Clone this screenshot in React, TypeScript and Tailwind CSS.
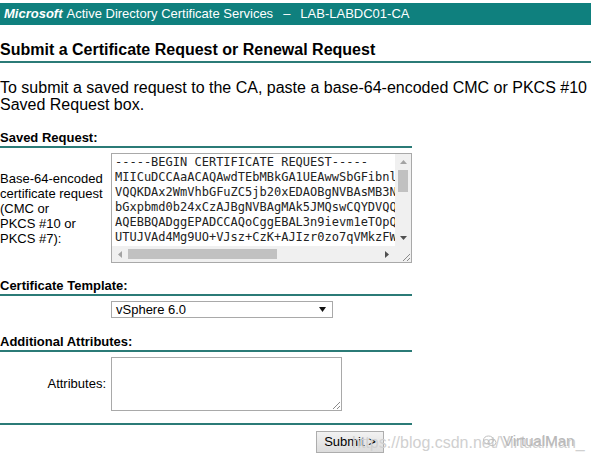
import React from 'react';

const csrLines = [
  '-----BEGIN CERTIFICATE REQUEST-----',
  'MIICuDCCAaACAQAwdTEbMBkGA1UEAwwSbGFibnlvbmQ',
  'VQQKDAx2WmVhbGFuZC5jb20xEDAOBgNVBAsMB3NlcnZ',
  'bGxpbmd0b24xCzAJBgNVBAgMAk5JMQswCQYDVQQGEwJ',
  'AQEBBQADggEPADCCAQoCggEBAL3n9ievm1eTOpQ4nZk',
  'UTUJVAd4Mg9UO+VJsz+CzK+AJIzr0zo7qVMkzFWq8Lx',
];

const SectionLabel: React.FC<{ children: React.ReactNode }> = ({ children }) => (
  <div className="border-b-2 border-[#2b7b77] pb-[1px] text-[13px] font-bold leading-[15px] text-black">
    {children}
  </div>
);

const ArrowUp = () => (
  <svg width="7" height="4" viewBox="0 0 7 4">
    <path d="M0 4 L3.5 0 L7 4 Z" fill="#a3a3a3" />
  </svg>
);

const ArrowDown = () => (
  <svg width="7" height="4" viewBox="0 0 7 4">
    <path d="M0 0 L3.5 4 L7 0 Z" fill="#505050" />
  </svg>
);

const ArrowLeft = () => (
  <svg width="4" height="7" viewBox="0 0 4 7">
    <path d="M4 0 L0 3.5 L4 7 Z" fill="#a3a3a3" />
  </svg>
);

const ArrowRight = () => (
  <svg width="4" height="7" viewBox="0 0 4 7">
    <path d="M0 0 L4 3.5 L0 7 Z" fill="#505050" />
  </svg>
);

const Grip = () => (
  <svg width="8" height="8" viewBox="0 0 8 8">
    <path d="M8 1 L1 8 M8 5 L5 8" stroke="#8a8a8a" strokeWidth="1" />
  </svg>
);

export default function App() {
  return (
    <div className="relative h-[465px] w-[591px] overflow-hidden bg-white font-['Liberation_Sans',Arial,sans-serif] text-black">
      {/* banner */}
      <div className="mt-[3px] flex h-[22px] items-center whitespace-nowrap bg-[#0f807e] px-[4px] text-[13px] text-white">
        <span className="font-bold italic">Microsoft</span>
        <span className="ml-[4px]">Active Directory Certificate Services</span>
        <span className="ml-[10px]">–</span>
        <span className="ml-[10px]">LAB-LABDC01-CA</span>
      </div>

      <div className="mt-[15px] border-b-2 border-[#2b7b77] pb-[2px] text-[16px] font-bold leading-[19px]">
        Submit a Certificate Request or Renewal Request
      </div>

      <p className="mt-[16px] whitespace-nowrap text-[16px] leading-[17px]">
        To submit a saved request to the CA, paste a base-64-encoded CMC or PKCS #10 certificate request or PKCS #7
        <br />
        Saved Request box.
      </p>

      <div className="mt-[17px] w-[412px]">
        <SectionLabel>Saved Request:</SectionLabel>

        <div className="mt-[5px] flex">
          <div className="w-[111px] pt-[18px] text-[13px] leading-[15px]">
            Base-64-encoded
            <br />
            certificate request
            <br />
            (CMC or
            <br />
            PKCS #10 or
            <br />
            PKCS #7):
          </div>
          <div className="flex h-[110px] w-[301px] border border-[#a9a9a9]">
            <div className="flex flex-1 flex-col overflow-hidden">
              <div className="flex-1 overflow-hidden whitespace-nowrap pl-[3px] pt-[1px] font-['DejaVu_Sans_Mono',monospace] text-[12px] leading-[15px] text-[#222]">
                {csrLines.map((l) => (
                  <div key={l}>{l}</div>
                ))}
              </div>
              <div className="flex h-[16px] items-center bg-[#f0f0f0]">
                <div className="flex w-[16px] justify-center">
                  <ArrowLeft />
                </div>
                <div className="h-[10px] w-[149px] bg-[#c1c1c1]" />
                <div className="flex-1" />
                <div className="flex w-[16px] justify-center">
                  <ArrowRight />
                </div>
              </div>
            </div>
            <div className="flex w-[16px] flex-col bg-[#f0f0f0]">
              <div className="flex h-[16px] items-center justify-center">
                <ArrowUp />
              </div>
              <div className="mx-auto h-[22px] w-[10px] bg-[#c1c1c1]" />
              <div className="flex-1" />
              <div className="flex h-[16px] items-center justify-center">
                <ArrowDown />
              </div>
              <div className="flex h-[16px] items-end justify-end bg-[#f0f0f0] pb-[1px] pr-[1px]">
                <Grip />
              </div>
            </div>
          </div>
        </div>

        <div className="mt-[15px]">
          <SectionLabel>Certificate Template:</SectionLabel>
        </div>

        <div className="ml-[111px] mt-[5px] flex h-[17px] w-[222px] items-center justify-between border border-[#a9a9a9] px-[4px] text-[13px]">
          <span>vSphere 6.0</span>
          <svg width="7" height="5" viewBox="0 0 7 5" className="mr-[2px]">
            <path d="M0 0 L3.5 5 L7 0 Z" fill="#111" />
          </svg>
        </div>

        <div className="mt-[16px]">
          <SectionLabel>Additional Attributes:</SectionLabel>
        </div>

        <div className="mt-[5px] flex items-center">
          <div className="w-[108px] pr-[2px] text-right text-[13px]">Attributes:</div>
          <div className="relative ml-[3px] h-[54px] w-[231px] border border-[#a9a9a9]">
            <div className="absolute bottom-[1px] right-[1px]">
              <Grip />
            </div>
          </div>
        </div>

        <div className="mt-[12px] border-b-2 border-[#2b7b77]" />

        <div className="ml-[316px] mt-[4px]">
          <button className="h-[22px] w-[68px] border border-[#adadad] bg-gradient-to-b from-[#f2f2f2] to-[#dcdcdc] text-[13px] leading-[20px] text-black">
            Submit &gt;
          </button>
        </div>
      </div>

      {/* watermark overlay */}
      <div className="absolute left-[352px] top-[431px] whitespace-nowrap text-[16px] text-[#d0d0d0]">
        https://blog.csdn.net/VirtualMan_
      </div>
      <div className="absolute left-[483px] top-[430px] flex items-center gap-[6px] whitespace-nowrap text-[15px] text-[#b8b8b8]">
        <svg width="14" height="12" viewBox="0 0 14 12">
          <ellipse cx="5.5" cy="5" rx="5" ry="4" fill="none" stroke="#c0c0c0" />
          <ellipse cx="9" cy="7.5" rx="4" ry="3.2" fill="none" stroke="#c0c0c0" />
        </svg>
        <span>VirtualMan</span>
      </div>
    </div>
  );
}
